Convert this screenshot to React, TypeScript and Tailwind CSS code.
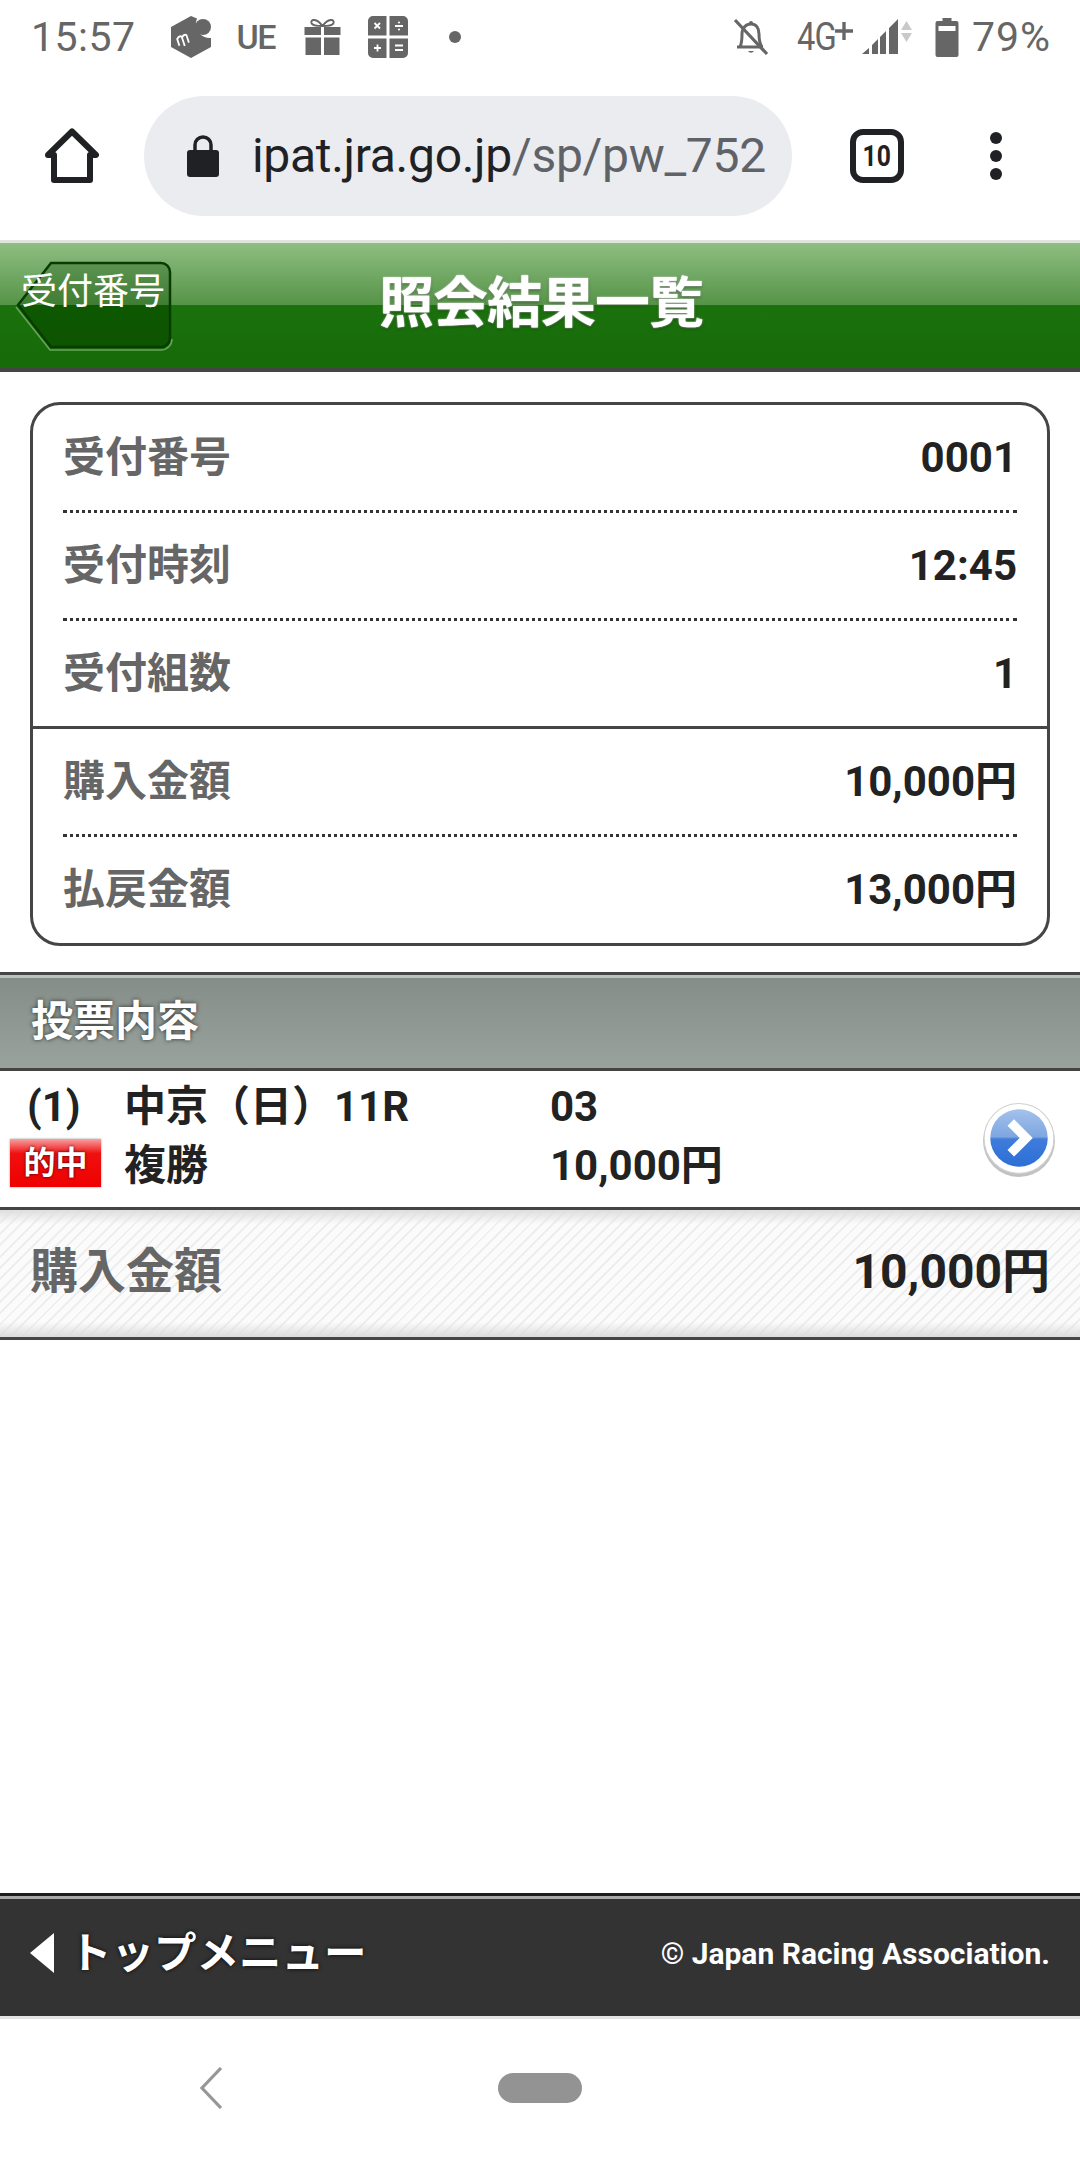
import React from "react";

const sans = "font-['Roboto','Noto_Sans_CJK_JP',sans-serif]";

function StatusBar() {
  return (
    <div className="flex h-[74px] items-center pl-[31px] pr-[29px] text-[#666666]">
      <span className="text-[41px] leading-none tracking-[0.5px]">15:57</span>
      <svg className="ml-[34px] h-[44px] w-[42px]" viewBox="0 0 42 44">
        <path d="M21 1 L27 3.5 A14 14 0 0 0 41 23 L41 32 L21 43 L1 32 L1 12 Z" fill="#666" />
        <circle cx="33" cy="12" r="8" fill="#666" />
        <path d="M6 29 V21 M6 22 q3-3 5-1 V31 M11 22 q3-3 5-1 V29" stroke="#fff" strokeWidth="1.8" fill="none" transform="rotate(-18 11 26) translate(2 1)" />
      </svg>
      <span className="ml-[25px] text-[34px] font-medium leading-none tracking-[-1.5px]">UE</span>
      <svg className="ml-[29px] h-[36px] w-[37px]" viewBox="0 0 36 36">
        <path d="M0 8 H16.5 V16 H0 Z M19.5 8 H36 V16 H19.5 Z M1 18.5 H16.5 V36 H1 Z M19.5 18.5 H35 V36 H19.5 Z" fill="#666" />
        <path d="M18 7 C12 -1 6 0 7 4 C8 7 13 7 18 7 C23 7 28 7 29 4 C30 0 24 -1 18 7" fill="none" stroke="#666" strokeWidth="2" />
      </svg>
      <svg className="ml-[26px] h-[42px] w-[42px]" viewBox="0 0 40 42">
        <path d="M5 0 H18.5 V19.5 H0 V5 A5 5 0 0 1 5 0 Z M21.5 0 H35 A5 5 0 0 1 40 5 V19.5 H21.5 Z M0 22.5 H18.5 V42 H5 A5 5 0 0 1 0 37 Z M21.5 22.5 H40 V37 A5 5 0 0 1 35 42 H21.5 Z" fill="#666" />
        <path d="M6.5 7 L12 12.5 M12 7 L6.5 12.5 M6 32 H13 M9.5 28.5 V35.5" stroke="#fff" strokeWidth="1.8" />
        <path d="M27 10 H35 M27 29.5 H35 M27 34 H35" stroke="#fff" strokeWidth="1.8" />
        <circle cx="31" cy="6.5" r="1.1" fill="#fff" /><circle cx="31" cy="13.5" r="1.1" fill="#fff" />
      </svg>
      <div className="ml-[40px] h-[12px] w-[12px] rounded-full bg-[#666666]" />
      <div className="flex-1" />
      <svg className="h-[38px] w-[36px]" viewBox="0 0 36 38">
        <path d="M4 29 H30 M7 29 C9 25 9 20 9 16 C9 10 13 6 18 6 C23 6 26 10 26 16 C26 20 26 25 29 29" fill="none" stroke="#666" strokeWidth="3" />
        <path d="M15 33 A3.5 3.5 0 0 0 21 33 Z M16 5 A2 2 0 0 1 20 5 Z" fill="#666" />
        <path d="M2 2 L34 36" stroke="#666" strokeWidth="3.2" />
      </svg>
      <span className="ml-[28px] origin-left scale-x-[0.86] text-[38px] leading-none tracking-[-1px]">4G</span>
      <svg className="mb-[12px] ml-[-7px] h-[18px] w-[18px]" viewBox="0 0 16 16"><path d="M0 8 H16 M8 0 V16" stroke="#666" strokeWidth="3" /></svg>
      <svg className="ml-[8px] h-[40px] w-[54px]" viewBox="0 0 52 40">
        <path d="M0 37 L7 31 V37 Z M10 28 L16 22 V37 H10 Z M18 20 L24 14 V37 H18 Z M27 11 L36 2 V37 H27 Z" fill="#666" />
        <path d="M39 13 L44.5 4 L50 13 Z" fill="#c9c9c9" /><path d="M39 16 H50 L44.5 25 Z" fill="#c9c9c9" />
      </svg>
      <svg className="ml-[20px] h-[39px] w-[24px]" viewBox="0 0 23 39">
        <path d="M7 0 H16 V3 H21 A2 2 0 0 1 23 5 V37 A2 2 0 0 1 21 39 H2 A2 2 0 0 1 0 37 V5 A2 2 0 0 1 2 3 H7 Z" fill="#666" />
        <rect x="3" y="8" width="17" height="5" fill="#fff" />
      </svg>
      <span className="ml-[13px] text-[41px] leading-none tracking-[1px]">79%</span>
    </div>
  );
}

function Toolbar() {
  return (
    <div className="flex h-[166px] items-center pb-[2px]">
      <div className="flex w-[144px] justify-center">
        <svg className="h-[56px] w-[54px]" viewBox="0 0 54 56">
          <path d="M27 3.5 L51 27 H45 V52 H9 V27 H3 Z" fill="none" stroke="#202124" strokeWidth="6" strokeLinejoin="round" />
        </svg>
      </div>
      <div className="flex h-[120px] w-[648px] items-center rounded-full bg-[#ebecf0] pl-[43px]">
        <svg className="h-[42px] w-[32px] shrink-0" viewBox="0 0 32 42">
          <path d="M8 18 V10 A8 8 0 0 1 24 10 V18" fill="none" stroke="#202124" strokeWidth="3.5" />
          <rect x="0" y="15" width="32" height="27" rx="3" fill="#202124" />
        </svg>
        <span className="ml-[33px] whitespace-nowrap text-[48px] leading-none tracking-[-0.3px] text-[#202124]">
          ipat.jra.go.jp<span className="text-[#5f6368]">/sp/pw_752</span>
        </span>
      </div>
      <div className="ml-[58px] flex h-[54px] w-[54px] items-center justify-center rounded-[13px] border-[6px] border-solid border-[#202124] leading-none text-[#202124]">
        <span className="scale-x-[0.85] text-[29px] font-bold leading-none">10</span>
      </div>
      <div className="ml-[86px] flex flex-col gap-[6px]">
        <div className="h-[12px] w-[12px] rounded-full bg-[#202124]" />
        <div className="h-[12px] w-[12px] rounded-full bg-[#202124]" />
        <div className="h-[12px] w-[12px] rounded-full bg-[#202124]" />
      </div>
    </div>
  );
}

function Header() {
  return (
    <div className="relative h-[132px] shrink-0 border-t-[3px] border-b-[4px] border-solid border-t-[#dfe4dd] border-b-[#454545] bg-[linear-gradient(#8fbe82_0%,#559347_50%,#1b720d_50%,#166a08_100%)]">
      <div className="flex h-full items-center justify-center pb-[4px] pl-[2px] text-[55px] font-bold leading-none tracking-[-1px] text-white [text-shadow:0_0_2px_#fff,0_1px_3px_rgba(0,0,0,0.6)]">
        照会結果一覧
      </div>
      <div className="absolute left-[15px] top-[17px] h-[91px] w-[158px]">
        <svg className="absolute inset-0 h-full w-full" viewBox="0 0 158 91">
          <defs>
            <linearGradient id="b" x1="0" y1="0" x2="0" y2="1">
              <stop offset="0" stopColor="#5d9352" /><stop offset="0.5" stopColor="#3f7d33" />
              <stop offset="0.5" stopColor="#0e5802" /><stop offset="1" stopColor="#0d5400" />
            </linearGradient>
          </defs>
          <path d="M36 3 H146 A9 9 0 0 1 155 12 V78 A9 9 0 0 1 146 87 H36 L3 45 Z" fill="url(#b)" stroke="#083c00" strokeWidth="2.5" />
          <path d="M1 47 L35 90 H146 A11 11 0 0 0 157 79" fill="none" stroke="#6aa45d" strokeWidth="1.5" />
        </svg>
        <span className="absolute left-[6px] top-[11px] whitespace-nowrap text-[36px] leading-[42px] text-white">受付番号</span>
      </div>
    </div>
  );
}

const rows = [
  { k: "受付番号", v: "0001", line: "dot" },
  { k: "受付時刻", v: "12:45", line: "dot" },
  { k: "受付組数", v: "1", line: "solid" },
  { k: "購入金額", v: "10,000円", line: "dot" },
  { k: "払戻金額", v: "13,000円", line: "" },
];

function Summary() {
  return (
    <div className="mx-[30px] mt-[30px] rounded-[30px] border-[3px] border-solid border-[#454545] px-[30px]">
      {rows.map((r) => (
        <div
          key={r.k}
          className={
            r.line === "dot"
              ? "flex h-[108px] items-center justify-between border-b-[3px] border-dotted border-[#333333]"
              : r.line === "solid"
              ? "-mx-[30px] flex h-[108px] items-center justify-between border-b-[3px] border-solid border-[#454545] px-[30px]"
              : "flex h-[106px] items-center justify-between"
          }
        >
          <span className="text-[42px] font-bold leading-none text-[#666666]">{r.k}</span>
          <span className="text-[42px] font-bold leading-none text-[#222222]">{r.v}</span>
        </div>
      ))}
    </div>
  );
}

function Section() {
  return (
    <div className="mt-[26px]">
      <div className="h-[3px] bg-[#454545]" />
      <div className="flex h-[96px] items-center border-t-[3px] border-b-[3px] border-solid border-t-[#b9c2bb] border-b-[#454545] bg-[linear-gradient(#858d88,#99a39d)] pl-[31px]">
        <span className="pb-[2px] text-[42px] font-bold leading-none text-white [text-shadow:0_0_4px_rgba(0,0,0,0.7)]">投票内容</span>
      </div>
      <div className="relative h-[139px] border-b-[3px] border-solid border-[#454545] text-[42px] font-bold leading-none text-[#222222]">
        <div className="flex h-[62px] items-center pt-[9px]">
          <span className="w-[124px] pl-[27px]">(1)</span>
          <span className="w-[426px]">中京（日）11R</span>
          <span>03</span>
        </div>
        <div className="flex h-[60px] items-center">
          <div className="ml-[10px] flex h-[48px] w-[91px] items-center justify-center bg-[linear-gradient(#f8a0a0_0%,#f01010_30%,#ef0000_100%)] leading-none text-white shadow-[0_0_2px_rgba(0,0,0,0.4)]">
            <span className="text-[32px] leading-none [text-shadow:0_0_3px_rgba(0,0,0,0.8)]">的中</span>
          </div>
          <span className="ml-[23px] w-[426px] pt-[5px]">複勝</span>
          <span className="pt-[5px]">10,000円</span>
        </div>
        <svg className="absolute right-[24px] top-[31px] h-[76px] w-[74px]" viewBox="0 0 72 74">
          <defs>
            <linearGradient id="c" x1="0" y1="0" x2="0" y2="1">
              <stop offset="0" stopColor="#a4c2ec" /><stop offset="0.48" stopColor="#7ea6e0" />
              <stop offset="0.52" stopColor="#3f7cdb" /><stop offset="1" stopColor="#2d6fd6" />
            </linearGradient>
          </defs>
          <ellipse cx="36" cy="38" rx="35" ry="35" fill="#8f8f8f" opacity="0.55" />
          <circle cx="36" cy="35.5" r="34" fill="#fff" stroke="#d0d0d0" strokeWidth="1" />
          <circle cx="36" cy="35" r="28" fill="url(#c)" />
          <path d="M28 20 L43 35 L28 50" fill="none" stroke="#fff" strokeWidth="9" />
        </svg>
      </div>
      <div className="flex h-[130px] items-center justify-between border-b-[3px] border-solid border-[#454545] bg-[linear-gradient(#dedede_0px,rgba(255,255,255,0)_14px,rgba(255,255,255,0)_112px,#dcdcdc_127px),repeating-linear-gradient(135deg,#eeeeee_0px,#eeeeee_2px,#fbfbfb_2px,#fbfbfb_8px)] px-[30px] pb-[3px]">
        <span className="text-[48px] font-bold leading-none text-[#666666]">購入金額</span>
        <span className="text-[48px] font-bold leading-none text-[#222222]">10,000円</span>
      </div>
    </div>
  );
}

function Footer() {
  return (
    <div className="shrink-0">
      <div className="h-[3px] bg-[#1c1c1c]" />
      <div className="flex h-[123px] items-center justify-between border-t-[3px] border-b-[3px] border-solid border-t-[#a8a8a8] border-b-[#e4e4e4] bg-[#333333] pb-[7px] pl-[30px] pr-[30px]">
        <div className="flex items-center">
          <svg className="mb-[3px] h-[40px] w-[24px]" viewBox="0 0 24 40"><path d="M24 0 V40 L0 20 Z" fill="#fff" /></svg>
          <span className="ml-[15px] text-[42.5px] font-bold leading-none text-white [text-shadow:0_0_4px_rgba(0,0,0,0.9)]">トップメニュー</span>
        </div>
        <span className="text-[30px] font-bold leading-none text-white">© Japan Racing Association.</span>
      </div>
    </div>
  );
}

function NavBar() {
  return (
    <div className="flex h-[141px] shrink-0 items-center pb-[3px]">
      <svg className="ml-[199px] h-[42px] w-[24px] shrink-0" viewBox="0 0 24 42">
        <path d="M22 1 L3 21 L22 41" fill="none" stroke="#979797" strokeWidth="3.2" />
      </svg>
      <div className="ml-[275px] h-[30px] w-[84px] rounded-[15px] bg-[#939393]" />
    </div>
  );
}

export default function App() {
  return (
    <div className={`flex h-[2160px] w-[1080px] flex-col overflow-hidden bg-white ${sans}`}>
      <StatusBar />
      <Toolbar />
      <Header />
      <div className="flex-1">
        <Summary />
        <Section />
      </div>
      <Footer />
      <NavBar />
    </div>
  );
}
